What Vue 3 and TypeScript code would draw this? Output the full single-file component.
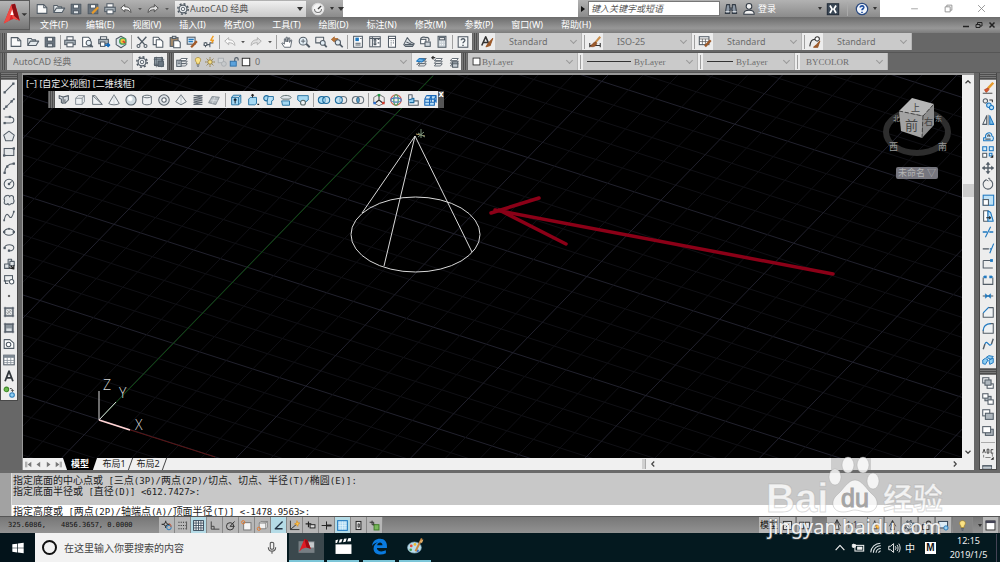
<script setup lang="ts">
const INK = '#525c66'
const BLUE = '#1f78c0'

const p = (d: string, c = INK, f = 'none', w = 1.2): string =>
  `<path d="${d}" stroke="${c}" fill="${f}" stroke-width="${w}" stroke-linejoin="round"/>`
const dot = (x: number, y: number, c = INK, r = 1.3): string =>
  `<rect x="${x - r}" y="${y - r}" width="${r * 2}" height="${r * 2}" fill="${c}"/>`
const ring = (x: number, y: number, r: number, c = INK, f = 'none', w = 1.2): string =>
  `<circle cx="${x}" cy="${y}" r="${r}" stroke="${c}" fill="${f}" stroke-width="${w}"/>`
const box = (x: number, y: number, w: number, h: number, c = INK, f = '#fff'): string =>
  `<rect x="${x}" y="${y}" width="${w}" height="${h}" stroke="${c}" fill="${f}" stroke-width="1.2"/>`

const brush = p('M14 2L8.500 8.500', '#c98e4c', 'none', 2.400) + p('M9 8C6 8 5 11 2.500 13C6 14 9.500 13 10 9.500Z', '#7c4420', '#9c5a2b', 0.800)
const gear = ring(8, 8, 4.500, INK, '#eef1f3', 1.400) + ring(8, 8, 2, INK, 'none', 1)
  + '<circle cx="8" cy="8" r="6" fill="none" stroke="#4a545e" stroke-width="1.600" stroke-dasharray="2.300 2.400"/>'
const sheets = p('M5 6.500L7 4H14L12 6.500ZM5 9.500L7 7H14L12 9.500ZM5 12.500L7 10H14L12 12.500Z', INK, '#fff', 1)

const icons: Record<string, string> = {
  new: p('M2.500 3H10L13.500 6.500V13H2.500Z', INK, '#fafafa') + p('M10 3V6.500H13.500'),
  open: p('M2 12V4H6L7 5.500H11V7M2 12L5 7H14.500L11.500 12Z', INK, '#e3e8eb'),
  save: p('M2.500 2.500H13.500V13.500H2.500Z', INK, '#69747f') + box(5, 3, 6, 4, INK, '#fff') + box(5, 10, 6, 3.500, INK, '#dfe4e8'),
  saveas: p('M2.500 2.500H13.500V13.500H2.500Z', INK, '#69747f') + box(5, 3, 6, 4, INK, '#fff') + p('M7 13L14 6', '#e69a2b', 'none', 2.500),
  print: box(4.500, 2, 7, 4) + box(2, 6, 12, 5, INK, '#aab4bb') + box(4.500, 9, 7, 4.500),
  preview: p('M3 2.500H9.500L12 5V13.500H3Z', INK, '#fff') + ring(10, 9, 3, INK, '#e8f2f8') + p('M12 11L14.500 14', INK, 'none', 2),
  publish: box(4, 2, 7, 3) + box(2, 5, 11, 5, INK, '#aab4bb') + box(4, 8, 5, 5) + p('M9 11.500H14M12 9.500L14.200 11.500L12 13.500', '#1769b5', 'none', 2),
  dwf: p('M8 1.500L13.500 4.500V11L8 14.500L2.500 11V4.500Z', INK, '#dfe8ee') + ring(10, 7, 3.500, '#4aa45a', '#f3c23c', 1.500) + p('M10 7L13 9', '#d3402f', 'none', 2),
  cut: p('M3 2L11 11M13 2L5 11', INK, 'none', 1.600) + ring(4, 12.500, 1.700) + ring(12, 12.500, 1.700),
  copy: p('M2.500 2.500H8L10 4.500V11H2.500Z', INK, '#fff') + p('M6 5.500H11.500L13.500 7.500V14H6Z', INK, '#fff'),
  paste: box(2.500, 3, 9, 10, INK, '#a2896a') + box(5, 1.500, 4, 2.500, INK, '#cdd3d8') + p('M6.500 6.500H12L14 8.500V14.500H6.500Z', INK, '#fff'),
  match: box(2.500, 2.500, 9, 8, INK, '#dce9f3') + p('M4 5H10M4 7.500H9', BLUE, 'none', 1.600) + p('M13.500 7L9 12L7 14', '#a35a28', 'none', 2.600),
  block: p('M2 11H9M4 8V14M9 14V9H13', INK) + box(2.500, 9, 3, 3) + p('M13 1L10 6H13L11 9', '#f09d22', 'none', 1.600),
  undo: p('M2 7L6.500 3V5.500C11.500 5.500 13.500 8 13.500 12C11.500 9.500 9.500 8.800 6.500 8.800V11.200Z', 'currentColor', '#fafafa', 1),
  redo: p('M14 7L9.500 3V5.500C4.500 5.500 2.500 8 2.500 12C4.500 9.500 6.500 8.800 9.500 8.800V11.200Z', 'currentColor', '#dfdfdf', 1),
  drop: '<path d="M5.500 6.500H10.500L8 9.500Z" fill="#555"/>',
  pan: p('M5 14L2 9.500L3.500 9L5 10.500V4.500L6 4L7 8V2.500L8.300 2.500L8.800 8L10 3L11.200 3.500L11 8.500L12.500 5.500L13.500 6L12 14Z', INK, '#fff', 1),
  zoomrt: ring(7, 7, 4.500, INK, '#e3eef5') + p('M4.500 7H9.500M7 4.500V9.500', INK, 'none', 1) + p('M10.500 10L14.500 14', INK, 'none', 2.200),
  zoomwin: p('M2 2.500H11V9H2Z') + ring(10, 9, 2.800, INK, '#e3eef5') + p('M12 11L14.500 14', INK, 'none', 2),
  zoomprev: p('M1.500 5L5 2V4H9V6.500H5V8Z', '#a45e26', '#bb7534', 0.800) + ring(9, 8.500, 3, INK, '#e3eef5') + p('M11 10.500L14.500 14', INK, 'none', 2),
  props: box(3, 1.500, 10, 12.500) + '<rect x="5" y="3" width="4" height="4" fill="#1f78c0"/>' + p('M5 9.500H11M5 11.500H11M10.500 4H12'),
  design: box(2, 2, 12, 11.500) + p('M5 2V13M7 5H9V7H7ZM11 5H13M7 9H9V11H7ZM11 9H13M2 4H14'),
  palette: box(4, 1.500, 8, 12.500) + p('M4 4H12M6.500 6.500H7.500M9 6.500H10M6.500 9H7.500M9 9H10M6.500 11.500H7.500'),
  sheetset: p('M2 11L6 3L10 8L14 10L12 13H4Z', INK, '#dde2e6') + p('M3 11H13M5 8L12 11'),
  markup: p('M3 5C3 2 8 2 9 3C13 2 13 6 12 7', INK, 'none', 1.400) + box(3, 5, 6, 5) + box(8, 8, 6, 5, INK, '#cfd6dc'),
  calc: box(3.500, 1.500, 9, 12.500, INK, '#cdd4d9') + box(5, 3, 6, 2.500) + p('M5.500 8H6.500M8 8H9M5.500 11H6.500M8 11H9M10.500 8H11M10.500 11H11', '#fff'),
  help: box(2.500, 2, 11, 12, INK, '#f5f7f8') + p('M6 6C6 3.500 10.500 3.800 10 6.500C9.700 7.800 8 7.700 8 9.500M8 11V12.500', INK, 'none', 1.600),
  gear,
  wssave: box(3, 3, 9, 9, INK, '#9da9b3') + p('M2 5H14M2 10.500H14M5 2V14M11 2V14', INK, 'none', 0.800) + box(7, 7, 6, 6, INK, '#6b7782'),
  layers: sheets + box(2, 6, 5, 7, INK, '#dfe5ea') + p('M3 8H6M3 10H6'),
  bulb: p('M8 2C4 2 3.500 6 6 8.500V10.500H10V8.500C12.500 6 12 2 8 2Z', '#a58634', '#fbe284', 1) + p('M6.300 12H9.700M7 13.800H9'),
  sun: ring(8, 8, 3, '#8a7337', '#f6df83') + p('M8 1.500V3.500M8 12.500V14.500M1.500 8H3.500M12.500 8H14.500M3.500 3.500L5 5M11 11L12.500 12.500M12.500 3.500L11 5M3.500 12.500L5 11', '#8a7337'),
  freeze: box(3, 3, 7, 6, '#a9adb0', '#d0d3d5') + ring(10.500, 10.500, 3.200, '#a9adb0', '#c6c9cb'),
  lock: p('M9 7V4C9 1.500 13.500 1.500 13.500 4V6', INK, 'none', 1.500) + box(3, 7, 8, 6.500, '#2d6ea5', '#5ba2dc'),
  square: box(3, 3, 10, 10, '#222', '#fff'),
  laymake: sheets + p('M3 7L6 4L12 5L9 8Z', BLUE, '#6fb3e5') + p('M3 11L6 9'),
  layprev: sheets + p('M2 3H6M4 1.500L2 3L4 5', '#333', 'none', 1.400),
  laystate: sheets + box(7.500, 8, 6, 6, INK, '#c9d1d8') + p('M7.500 10H13.500'),
  tstyle: p('M2 12L6.500 2L10.500 11M4 8.500H9', '#333', 'none', 1.800) + p('M14.500 4L9 10L7 13.500L11.500 12Z', '#9c5a2b', '#9c5a2b'),
  dstyle: p('M2 9V14M14 9V14M2 12H14', '#333', 'none', 1.200) + brush,
  tbstyle: box(1.500, 2, 11, 9) + p('M1.500 4.500H12.500M5 4.500V11M8.500 4.500V11M1.500 7.500H12.500', '#555', 'none', 0.800) + p('M14.500 6L8 13', '#9c5a2b', 'none', 2.800),
  mlstyle: p('M2 13C3 7 4 5 8 5', '#333') + ring(10.500, 4.500, 2.500, '#333', '#fff') + p('M13.500 7L10 11L6.500 14H11Z', '#9c5a2b', '#9c5a2b'),
  line: p('M3 13L13 3') + dot(3, 13) + dot(13, 3),
  xline: p('M2 14L14 2') + dot(5, 11) + dot(11, 5) + dot(2.500, 13.500, INK, 1) + dot(13.500, 2.500, INK, 1),
  pline: p('M3 4.500H9C15 4.500 15 11.500 9 11.500H3') + dot(3, 11.500) + dot(9, 4.500),
  polygon: p('M8 2.500L14 7L11.800 13.500H4.200L2 7Z', INK, '#e3e6e8'),
  rect: box(2.500, 4, 11, 8, INK, '#e3e6e8') + dot(2.500, 12) + dot(13.500, 4),
  arc: p('M3 14C3 7 7 3 13.500 3') + dot(3, 13.500) + dot(6, 6.500) + dot(13.500, 3),
  circle: ring(8, 8, 5.500, INK, '#eef0f1') + p('M8 8L11 5') + dot(8, 8),
  cloud: p('M5.500 3C7.500 1.500 9 4 8.500 4.500C10 1.500 14 3 13 6.500C14.500 9 13.500 13.500 10.500 12C8 15 6.500 13 7 12C4 14.500 1.500 12 3 8.500C1.500 6.500 3 3 5.500 3Z', INK, '#e3e6e8'),
  spline: p('M2.500 13C4 5 6 5 8 8C10 12 12 9 13.500 3') + dot(2.500, 13, INK, 1) + dot(13.500, 3, INK, 1),
  ellipse: '<ellipse cx="8" cy="8" rx="5.500" ry="3.700" fill="#eef0f1" stroke="#4a545e" stroke-width="1.200"/>' + dot(2.500, 8) + dot(13.500, 8) + dot(8, 4.300, INK, 1),
  earc: p('M3 8C3 3 14 3 13.500 8C13 11 10 11.500 8 11') + dot(3, 8) + dot(8, 11),
  insert: p('M3 8H8V13H3ZM7 8V2.500H11V5M9 5H14V10H9Z', INK, '#dfe3e6') + p('M8 12.500L13.500 13.500V9.500M10 10L13.500 13.500', '#222', 'none', 1.400),
  makeblk: box(3, 3, 9, 6, INK, '#eef0f1') + ring(11, 10, 2.500, INK, '#fff') + p('M2 9H4V12H7'),
  point: dot(8, 8, '#666', 1.200),
  hatch: box(3.500, 3.500, 9, 9, INK, '#e0e3e5') + p('M2 3.500H14M2 12.500H14M3.500 2V14M12.500 2V14', INK, 'none', 0.900) + p('M5 5L11 11M5 8L8 11M8 5L11 8M5 11L11 5', '#999', 'none', 0.800),
  gradient: box(3.500, 3.500, 9, 9, INK, '#8c969e') + p('M2 3.500H14M2 12.500H14M3.500 2V14M12.500 2V14', INK, 'none', 0.900) + '<rect x="5" y="8.500" width="6" height="3" fill="#d9dee2"/>',
  region: p('M2.500 3H9L13.500 7V13H2.500Z', INK, '#fff') + ring(7.500, 8.500, 2.600),
  table: box(2, 2.500, 12, 11) + '<rect x="2" y="2.500" width="12" height="3" fill="#7c8791"/>' + p('M6 5V13.500M10 5V13.500M2 8.500H14M2 11H14', '#7f8a93', 'none', 0.900),
  mtext: p('M3.500 14L8 2.500L12.500 14M5 10H11', '#30363b', 'none', 2),
  addsel: ring(5, 5, 2.600, '#3f8a2a', '#6dbb4c') + ring(11.500, 11.500, 2.600, '#2c7db9', '#8fcdf2') + p('M9 4C12 4 12 5 12 7M10.500 6L12 7.500L13.500 6', '#333', 'none', 1),
  psolid: p('M2.500 3L7 4.500V12L5 11V7L2.500 6ZM7 4.500L13 3V8L9 12V7', INK, '#d5dadf'),
  cube: p('M3 6L6 3H13V10L10.500 13H3ZM3 6H10.500L13 3M10.500 6V13', '#7b858d', '#eef1f3', 1),
  wedge: p('M3 3V13H14ZM3 3L6 3L14 13', '#59636c', '#eef1f3', 1),
  cone: p('M8 2L14 12C12 14 4 14 2 12Z', '#59636c', '#eef1f3', 1) + p('M8 2V13', '#c5cacf', 'none', 0.800),
  sphere: ring(8, 8, 5.800, '#59636c', '#cdd8de') + ring(7, 6.500, 2.500, '#eef3f5', '#fff', 1),
  cylinder: p('M3 4V12C5 14 11 14 13 12V4C11 2 5 2 3 4C5 6 11 6 13 4', '#59636c', '#eef1f3', 1),
  torus: ring(8, 8, 6, '#59636c', '#dfe4e8') + ring(8, 8, 2.500, '#59636c', '#fff'),
  pyramid: p('M8 2L14 10L8 13.500L2 10Z', '#59636c', '#eef1f3', 1) + p('M8 2V13', '#adb5bb', 'none', 0.800),
  helix: p('M3 3H13L3 5.500H13L3 8H13L3 10.500H13L3 13H13', INK, 'none', 1.100),
  planar: p('M2 11L6 4L14 5L10 13Z', '#8d959c', '#b4bbc0') + p('M4 8L12 9M9 4.500L6 12', '#e0e3e6', 'none', 0.800),
  extrude: p('M3 5L5 2.500H13.500V11L11 13.500H3ZM3 5H11L13.500 2.500M11 5V13.500', '#1c6a9c', '#a4d8f2', 1) + p('M7 12V7M5.500 8.500L7 6.500L8.500 8.500', '#123'),
  presspull: p('M3 7L5 5H12V12L10 13.500H3Z', '#1c6a9c', '#a4d8f2', 1) + p('M7.500 5V1.500M6 3L7.500 1.500L9 3M13 13H15', '#222'),
  sweep: ring(5, 6, 3, '#1c6a9c', '#a4d8f2') + p('M7 4H13V8L11 9V13H6V9Z', '#1c6a9c', '#b9e1f6', 1),
  revolve: p('M2 5C4 2 12 2 14 5L12 7H4Z', '#566', '#dfe5e9', 1) + p('M3 9H12V14H4Z', '#1c6a9c', '#a4d8f2', 1),
  loft: p('M2 3H14V8L10 11H6L2 8Z', '#1c6a9c', '#a4d8f2', 1) + ring(8, 11, 2.800, '#566', '#eef1f3'),
  union: ring(5.500, 8, 4, '#1c6a9c', '#a4d8f2') + ring(10.500, 8, 4, '#1c6a9c', '#a4d8f288'),
  subtract: ring(10.500, 8, 4, '#67727b', '#eee') + ring(5.500, 8, 4, '#1c6a9c', '#a4d8f2aa'),
  intersect: ring(5.500, 8, 4, '#67727b') + ring(10.500, 8, 4, '#67727b') + p('M8 5C6.500 7 6.500 9 8 11C9.500 9 9.500 7 8 5Z', '#1c6a9c', '#8fcdf0', 1),
  move3: p('M8 8V2M8 8L3 12M8 8L13 12', '#333') + p('M8 1.500L14 5V11.500L8 14.500L2 11.500V5Z', '#666', 'none', 1) + dot(8, 2.500, '#279c46', 1.400) + dot(3, 11.500, '#2b6fd0', 1.400) + dot(13, 11.500, '#d63a2a', 1.400),
  rot3: ring(8, 8, 6, '#d6564a') + '<ellipse cx="8" cy="8" rx="2.500" ry="6" fill="none" stroke="#3e9e54" stroke-width="1.300"/><ellipse cx="8" cy="8" rx="6" ry="2.500" fill="none" stroke="#4a78bb" stroke-width="1.300"/>',
  align3: p('M3 2H7V9H14V14H3Z', '#59636c', '#eef1f3') + p('M3 8L9 6V11H4', '#1c6a9c', '#8fcdf0'),
  array3: p('M2 7H13V14H2ZM4 3H15V11M2 7L4 3M13 7L15 3M7.500 7L9.500 3V10M2 10.500H13L15 7M7.500 7V14', '#1a68b8', '#b8e0f8', 1.200),
  erase: p('M14 2L8 8.500', '#e69a2b', 'none', 2.800) + p('M8 8L4 10L6 13L9 10Z', '#b44222', '#d8582f', 1) + p('M2 14H13', '#555'),
  copyo: ring(5, 4.500, 2.500) + ring(9, 9.500, 2.600, BLUE, '#bfe2f7') + ring(12, 12, 2.400, BLUE, '#bfe2f7') + p('M9.500 3.500H13V6', '#333'),
  mirror: p('M6.500 3V13H2Z', INK, '#eef1f3') + p('M10 3V13H14.500Z', BLUE, '#7fc0ea') + p('M8.200 2V14', '#555', 'none', 0.800),
  offset: p('M3 13.500V10H5.500C3 5 12.500 1 12.500 8C15 8.500 14.500 13.500 12.500 13.500Z', BLUE, '#cfe9f9') + p('M5 11.500H11M8 9C7 6 10.500 6 10 9', INK, 'none', 1.500),
  array: box(2, 2, 4.500, 4.500, BLUE, '#d5ecf9') + box(9.500, 2, 4.500, 4.500, BLUE, '#d5ecf9') + box(2, 9.500, 4.500, 4.500, INK, '#fff') + box(9.500, 9.500, 3, 3, BLUE, '#d5ecf9') + '<path d="M14 11V14.500H10.500Z" fill="#222"/>',
  move: p('M8 2V14M2 8H14', INK, 'none', 1.600) + p('M6 4L8 1.500L10 4ZM6 12L8 14.500L10 12ZM4 6L1.500 8L4 10ZM12 6L14.500 8L12 10Z', INK, INK, 0.800),
  rotate: p('M10.500 3.500A5.500 5.500 0 1 1 5.500 3.400') + p('M4 5L5.500 3L8.500 4.500M8 1.500H10V4', INK, 'none', 1),
  scale: box(2.500, 2.500, 12, 11.500, BLUE, '#bfe2f7') + box(2.500, 7.500, 6, 6.500, INK, '#fff'),
  stretch: p('M3 2H8V14H3Z', INK, '#fff') + p('M8 2L11 4L14 14H8Z', BLUE, '#bfe2f7') + p('M6 10H11M9.500 8.500L11 10L9.500 11.500', '#222'),
  trim: p('M2 8H7M9.500 8H14', BLUE, 'none', 1.500) + p('M5 14L11 2', BLUE, 'none', 1.300),
  extend: p('M2 9H9', INK, 'none', 1.500) + p('M10 9H12M10 14L14.500 3', BLUE, 'none', 1.300),
  breakpt: p('M2.500 4V12.500H13.500', INK) + p('M2.500 4H11', INK) + dot(12, 4, BLUE, 1.600),
  brk: p('M2.500 5V13H13.500V5', INK) + p('M2.500 4.500H5M11 4.500H13.500', BLUE, 'none', 1.500) + dot(5, 4.500, BLUE, 1.500) + dot(11, 4.500, BLUE, 1.500),
  join: p('M2 8H14', INK) + p('M5 5.500L8 8L5 10.500ZM11 5.500L8 8L11 10.500Z', BLUE, BLUE, 0.600),
  chamfer: p('M2.500 9V14H14V3H9', INK, '#eef1f3') + p('M2.500 9L9 2.500', BLUE, 'none', 1.400),
  fillet: p('M2.500 10V14H14V3H10', INK, '#eef1f3') + p('M2.500 11C2.500 6 6 3 11 3', BLUE, 'none', 1.400),
  blend: p('M2.500 14L4.500 8M12 8L14 2', INK, 'none', 1.600) + p('M4.500 8C7 2 9 13 12 8', BLUE, 'none', 1.400),
  explode: p('M2 8L5 6L8 8L5 13L2 12ZM6 5L9 3L14 4L11 7ZM9 8L14 6V11L10 13Z', BLUE, '#8fcdf0', 1.100),
  front: box(2, 2, 7, 6) + box(7, 9, 7, 5) + box(4.500, 4.500, 7, 6, INK, '#aeb6bd'),
  back: box(4.500, 5, 7, 5, INK, '#aeb6bd') + box(2, 2, 6, 5) + box(8, 9, 6, 5),
  above: box(2, 2, 8, 7) + box(5, 6, 9, 7, INK, '#aeb6bd'),
  under: box(5, 6, 9, 7, INK, '#aeb6bd') + box(2, 3, 9, 7),
  textfront: p('M2 7L3.500 2.500L5 7M7 2.500V7H9V2.500ZM14 3H11.500V7H14', '#333', 'none', 1) + p('M3 9V12M5 12H11M13 7V11', '#777', 'none', 1) + '<path d="M14.500 11V14.500H11Z" fill="#222"/>',
  hatchback: box(2, 3, 10, 8, INK, '#8f9aa4') + p('M2 5.500H12M2 8H12', '#fff', 'none', 0.800) + p('M13 9V14', '#222'),
  compass: ring(8, 8, 6.500, '#ddd', '#f4f4f4', 1.500) + p('M8 8L11.500 4.500', '#444', 'none', 1.600) + p('M4 8A4 4 0 0 0 12 8', '#777'),
  infer: p('M7 2V11M2 6.500H12', '#333', 'none', 1.500) + ring(7, 6.500, 2, '#333', '#bbb') + ring(11, 10.500, 2.800, '#2879b8') + p('M11 6C14 6 14 9 13 10', '#d0572f'),
  snap: p('M3 4H12M3 8H12M3 12H12', '#333', 'none', 1.300).replace('/>', ' stroke-dasharray="1.300 1.500"/>') + p('M13 3V13', '#555'),
  grid: box(2, 2, 12, 12, '#345', '#fff') + p('M5 2V14M8 2V14M11 2V14M2 5H14M2 8H14M2 11H14', '#345', 'none', 1),
  ortho: p('M4 3V12.500H14M4 9H7.500V12.500', '#444'),
  polar: ring(7.500, 9, 4.500, '#333') + p('M7.500 9L13 3M7.500 9H13', '#333'),
  osnap: box(4.500, 4.500, 9, 9, '#777', '#f5f5f5') + ring(4, 4, 2, '#e07a31'),
  osnap3: p('M4 5L6 3H14V10L12 12H4ZM4 5H12L14 3M12 5V12', '#777', '#f2f2f2', 1) + ring(3.500, 12, 2, '#e07a31'),
  otrack: p('M13 3L4 12H13', '#234', 'none', 1.600),
  ducs: p('M3 2V13H14M3 13L11 6', '#333') + p('M11 2L12 4.500L14.500 5L12.500 6.500L12 9L10.500 7L8 6L10.500 5Z', '#d98a19', '#ffc74a', 0.800),
  dyn: p('M2 6H9M5.500 3V10', '#222', 'none', 1.400) + box(7.500, 7, 6, 4, '#222', '#ddd'),
  lwt: p('M2 8H14M8 3V13', '#222', 'none', 1.200) + p('M8 8H14', '#222', 'none', 2.400),
  tpy: box(2, 2, 12, 12, '#1f78c0', '#a8d5f1') + p('M3 5H13M3 8H13M3 11H13M5 3V13M8 3V13M11 3V13', '#e8f5fc', 'none', 0.800),
  qp: box(5, 3, 6, 10, '#222', '#ddd') + p('M7.500 6H9V10H7.500Z', '#222', 'none', 1),
  sc: p('M2 4H7V8M5 2V7H9', '#333') + box(7.500, 7, 6, 6.500, '#3f7d2a', '#79b95c'),
  layout: box(3, 3, 10, 10, '#333', '#e7e7e7') + p('M6 10L10 6', '#333'),
  quick: box(2, 4, 5, 8, '#333', '#eee') + box(9, 4, 5, 8, '#333', '#eee'),
  anno: p('M8 2L10.500 13H5.500ZM8 2L4 9M8 2L12 9', '#333', '#ddd', 1),
  sunadd: p('M7 2L10 12H4Z', '#333', '#ddd', 1) + ring(11, 9, 2.500, '#d98a19', '#ffc74a'),
  wslock: box(3, 7, 8, 6, '#333', '#ddd') + p('M8 7V4.500C8 2 13 2 13 4.500V7', '#333', 'none', 1.400),
  hardware: box(2, 3, 11, 8, '#345', '#dcecf6') + ring(11, 11, 2.600, '#2879b8', '#9ad1f2'),
  clean: box(2.500, 2.500, 11, 11, '#333', '#fff') + '<rect x="2" y="2" width="12" height="3" fill="#445"/>',
  binoc: p('M3 3H6.500V7H9.500V3H13L14.500 13H9.500V9H6.500V13H1.500Z', '#333b45', '#8d98a5', 1.200) + p('M1.500 11H6.500M9.500 11H14.500', '#fff', 'none', 0.800),
  user: ring(8, 5, 3.200, '#333b45', '#f3f3f3') + p('M2 14C2 10 5 9.500 8 9.500S14 10 14 14Z', '#333b45', '#f3f3f3'),
  exchange: box(1.500, 2, 13, 12.500, '#222c38', '#3b4856') + p('M4.500 4L7 8.200L4.500 12.500M11.500 4L9 8.200L11.500 12.500', '#fff', 'none', 2),
  qmark: ring(8, 8, 6.500, '#2b4a80', '#f1f5fb', 1.400) + p('M6 6.200C6 3.800 10.500 4 10 6.500C9.700 7.800 8 7.700 8 9.500M8 11V12.500', '#1e4ea0', 'none', 1.900),
  min: p('M2 8.500H14', '#999', 'none', 1.500),
  restore: p('M2 5H11V14H2ZM5 5V2H14V11H11', '#888', 'none', 1.500),
  close: p('M2 2L14 14M14 2L2 14', '#888', 'none', 1.500),
  cmin: p('M2 11H14', '#222', 'none', 3),
  crestore: p('M2 7H10V13H2ZM5 7V3H14V10H10', '#222', 'none', 2),
  cclose: p('M3 3L13 13M13 3L3 13', '#222', 'none', 3),
  first: p('M3 3V13M5 3V13', '#777') + '<path d="M13 3V13L6.500 8Z" fill="#777"/>',
  prev: '<path d="M11 3V13L4.500 8Z" fill="#777"/>',
  next: '<path d="M5 3V13L11.500 8Z" fill="#777"/>',
  last: p('M13 3V13M11 3V13', '#777') + '<path d="M3 3V13L9.500 8Z" fill="#777"/>',
  up: p('M3 10.500L8 5.500L13 10.500', '#444', 'none', 2.400),
  down: p('M3 5.500L8 10.500L13 5.500', '#444', 'none', 2.400),
  left: p('M10.500 3L5.500 8L10.500 13', '#444', 'none', 2.400),
  right: p('M5.500 3L10.500 8L5.500 13', '#444', 'none', 2.400),
  win: '<path d="M1.500 3.800L7 3V7.600H1.500ZM7.800 2.900L14.500 2V7.600H7.800ZM1.500 8.400H7V13L1.500 12.200ZM7.800 8.400H14.500V14L7.800 13.100Z" fill="#fff"/>',
  mic: p('M6 2.500C6 1 10 1 10 2.500V8C10 10 6 10 6 8ZM3.800 7C3.800 13 12.200 13 12.200 7M8 11.500V14.500', '#555', 'none', 1.200),
  acad: '<rect x="0.500" y="3" width="15" height="11" fill="#777f84"/><rect x="9" y="4" width="6" height="5" fill="#c6cacc"/><path d="M1 13L6 1L9 2L12 10L8 9L4 10Z" fill="#e01b24"/><path d="M6 1L8 9L12 10L9 2Z" fill="#9d0c14"/>',
  clap: '<rect x="0.500" y="6" width="15" height="9" fill="#fff"/><path d="M0.500 2L3 1.500L2 4.500L0.500 5ZM4.500 1.300L7 1L6 4L3.500 4.400ZM8.500 0.800L11 0.500L10 3.500L7.500 3.900ZM12.500 0.300L15 0V3L11.500 3.400Z" fill="#fff"/>',
  edge: '<path d="M1 7.500C1.500 3 4.500 0.800 8.500 0.800C13 0.800 15 4 15 7.500V9.500H5.500C5.700 13 10.500 13.500 14 11.600V14.400C9 17 2.400 15.300 2.400 10C2.400 7 4.200 5 6.500 4C4.200 4.300 2.300 5.700 1 7.500ZM5.800 6.800H10.800C10.800 3.500 6.400 3.500 5.800 6.800Z" fill="#0a7be0"/>',
  paint: '<ellipse cx="7" cy="9" rx="6.500" ry="5.200" fill="#b9dceb" stroke="#7fa8ba" stroke-width="0.600"/><circle cx="4" cy="7.500" r="1.300" fill="#e24b3c"/><circle cx="7.500" cy="6" r="1.300" fill="#f0b92c"/><circle cx="3.500" cy="11" r="1.200" fill="#49a04b"/><circle cx="10" cy="12" r="1.200" fill="#3b6fc0"/><path d="M14 0.500L8 12.500" stroke="#c78743" stroke-width="1.800"/><path d="M12 3L15.500 1.500L14 5Z" fill="#e6b46e"/>',
  trayup: p('M3 10.500L8 5L13 10.500', '#eee', 'none', 1.300),
  battery: '<rect x="4.500" y="5" width="10" height="6.500" fill="none" stroke="#eee" stroke-width="1.200"/><rect x="7" y="6.500" width="6" height="3.500" fill="#eee"/><path d="M3 3V8M1.500 4H5V7H1.500Z" stroke="#eee" fill="#eee"/>',
  wifi: p('M2 13A11 11 0 0 1 13 2.500M5 13.500A8 8 0 0 1 13.500 5.500M8 13.500A5.500 5.500 0 0 1 13.500 8.500M11 13.500A2.500 2.500 0 0 1 13.500 11.500', '#dfe5e7', 'none', 1.200),
  sound: p('M2 6H4L7.500 3V13L4 10H2ZM9.500 6C10.500 7 10.500 9 9.500 10M11.500 4.500C13 6.500 13 9.500 11.500 11.500M13.500 3C15.500 6 15.500 10 13.500 13', '#eee', 'none', 1.100),
}

const menus = ['文件(F)', '编辑(E)', '视图(V)', '插入(I)', '格式(O)', '工具(T)', '绘图(D)', '标注(N)', '修改(M)', '参数(P)', '窗口(W)', '帮助(H)']
const quick = ['new', 'open', 'save', 'saveas', 'print', 'undo', 'drop', 'redo', 'drop']
const standard = ['new', 'open', 'save', '|', 'print', 'preview', 'publish', 'dwf', '|', 'cut', 'copy', 'paste', 'match', 'block', '|', 'undo', 'drop', 'redo', 'drop', '|', 'pan', 'zoomrt', 'zoomwin', 'zoomprev', '|', 'props', 'design', 'palette', 'sheetset', 'markup', 'calc', '|', 'help']
const styleCombos = [
  { icon: 'tstyle', text: 'Standard', label: '文字样式' },
  { icon: 'dstyle', text: 'ISO-25', label: '标注样式' },
  { icon: 'tbstyle', text: 'Standard', label: '表格样式' },
  { icon: 'mlstyle', text: 'Standard', label: '多重引线样式' },
]
const propCombos = [
  { kind: 'color', text: 'ByLayer', label: '颜色' },
  { kind: 'ltype', text: 'ByLayer', label: '线型' },
  { kind: 'lweight', text: 'ByLayer', label: '线宽' },
  { kind: 'plot', text: 'BYCOLOR', label: '打印样式' },
]
const draw = ['line', 'xline', 'pline', 'polygon', 'rect', 'arc', 'circle', 'cloud', 'spline', 'ellipse', 'earc', 'insert', 'makeblk', 'point', 'hatch', 'gradient', 'region', 'table', 'mtext', 'addsel']
const modify = ['erase', 'copyo', 'mirror', 'offset', 'array', 'move', 'rotate', 'scale', 'stretch', 'trim', 'extend', 'breakpt', 'brk', 'join', 'chamfer', 'fillet', 'blend', 'explode']
const order = ['front', 'back', 'above', 'under', '|', 'textfront', 'hatchback']
const modeling = ['psolid', 'cube', 'wedge', 'cone', 'sphere', 'cylinder', 'torus', 'pyramid', 'helix', 'planar', '|', 'extrude', 'presspull', 'sweep', 'revolve', 'loft', '|', 'union', 'subtract', 'intersect', '|', 'move3', 'rot3', 'align3', 'array3']
const toggles = ['infer', 'snap', 'grid', 'ortho', 'polar', 'osnap', 'osnap3', 'otrack', 'ducs', 'dyn', 'lwt', 'tpy', 'qp', 'sc']
const active = new Set(['grid', 'otrack', 'tpy'])
const navs = ['first', 'prev', 'next', 'last']
const tasks = ['acad', 'clap', 'edge', 'paint']
const history = ['指定底面的中心点或 [三点(3P)/两点(2P)/切点、切点、半径(T)/椭圆(E)]:', '指定底面半径或 [直径(D)] <612.7427>:']
const prompt = '指定高度或 [两点(2P)/轴端点(A)/顶面半径(T)] <-1478.9563>:'

interface Run { text: string; latin: boolean }
const runs = (s: string): Run[] =>
  (s.match(/[\x20-\x7e]+|[^\x20-\x7e]+/g) ?? []).map((text) => ({ text, latin: text.charCodeAt(0) < 127 }))

interface GridLine { x1: number; y1: number; x2: number; y2: number; major: boolean }
const SPAN = 2400
const gridLines: GridLine[] = []
for (let k = -60; k <= 60; k++) {
  const y = 320 + k * 20
  gridLines.push({ x1: 0, y1: y, x2: SPAN, y2: y + SPAN * 0.322, major: k % 5 === 0 })
}
for (let m = -20; m <= 100; m++) {
  const x = 410.500 + m * 34.900
  gridLines.push({ x1: x, y1: 0, x2: x - SPAN / 1.030, y2: SPAN, major: m % 5 === 0 })
}
</script>

<template>
  <div class="app">
    <header class="head">
      <button class="logo" aria-label="应用程序菜单">
        <svg viewBox="0 0 30 30">
          <path d="M3 24L11 4L15 3L20 21L14 19L9 21Z" fill="#d8232a" />
          <path d="M11 4L15 3L20 21L15 19Z" fill="#8d1016" />
          <path d="M3 24L9 21L11 14L13 19L20 21L14 16L11 4Z" fill="#ef4a43" />
          <path d="M10 15L12 9L13.500 15Z" fill="#fff" />
          <path d="M22 13H28L25 16Z" fill="#333" />
        </svg>
      </button>
      <div class="title">
        <div class="title-left">
          <div class="quick">
            <button v-for="(n, i) in quick" :key="i" class="tb" :class="{ thin: n === 'drop' }" :aria-label="n">
              <svg viewBox="0 0 16 16" v-html="icons[n]" />
            </button>
          </div>
          <label class="ws">
            <svg viewBox="0 0 16 16" v-html="icons.gear" />
            <select aria-label="工作空间"><option>AutoCAD 经典</option></select>
            <i class="tri" />
          </label>
          <button class="tb" aria-label="导航"><svg viewBox="0 0 16 16" v-html="icons.compass" /></button>
          <i class="tri small" />
          <i class="tri" />
        </div>
        <div class="title-right">
          <i class="tri east" />
          <input class="find" type="text" placeholder="键入关键字或短语" aria-label="搜索帮助">
          <button class="tb" aria-label="搜索"><svg viewBox="0 0 16 16" v-html="icons.binoc" /></button>
          <button class="login"><svg viewBox="0 0 16 16" v-html="icons.user" />登录</button>
          <i class="tri small" />
          <button class="tb" aria-label="Exchange"><svg viewBox="0 0 16 16" v-html="icons.exchange" /></button>
          <i class="rule" />
          <button class="tb" aria-label="帮助"><svg viewBox="0 0 16 16" v-html="icons.qmark" /></button>
          <i class="tri small" />
        </div>
        <div class="winbtns">
          <button v-for="n in ['min', 'restore', 'close']" :key="n" :aria-label="n"><svg viewBox="0 0 16 16" v-html="icons[n]" /></button>
        </div>
      </div>
      <nav class="menu">
        <button v-for="m in menus" :key="m">{{ m }}</button>
        <span class="docbtns">
          <button v-for="n in ['cmin', 'crestore', 'cclose']" :key="n" :aria-label="n"><svg viewBox="0 0 16 16" v-html="icons[n]" /></button>
        </span>
      </nav>
    </header>

    <div class="row">
      <i class="grip" />
      <div class="bar standard">
        <template v-for="(n, i) in standard" :key="i">
          <i v-if="n === '|'" class="sep" />
          <button v-else class="tb" :class="{ thin: n === 'drop', dim: n === 'undo' || n === 'redo' }" :aria-label="n"><svg viewBox="0 0 16 16" v-html="icons[n]" /></button>
        </template>
      </div>
      <i class="grip" />
      <div v-for="(c, i) in styleCombos" :key="i" class="bar styled" :class="{ lead: i === 0 }">
        <i v-if="i" class="sep" />
        <button class="tb" :aria-label="c.label"><svg viewBox="0 0 16 16" v-html="icons[c.icon]" /></button>
        <label class="combo centered"><select :aria-label="c.label"><option>{{ c.text }}</option></select></label>
      </div>
    </div>

    <div class="row second">
      <i class="grip" />
      <div class="bar wsbar">
        <label class="combo"><select aria-label="工作空间"><option>AutoCAD 经典</option></select></label>
        <button class="tb" aria-label="设置"><svg viewBox="0 0 16 16" v-html="icons.gear" /></button>
        <button class="tb" aria-label="保存空间"><svg viewBox="0 0 16 16" v-html="icons.wssave" /></button>
      </div>
      <i class="grip" />
      <div class="bar laybar">
        <button class="tb" aria-label="图层特性"><svg viewBox="0 0 16 16" v-html="icons.layers" /></button>
        <label class="combo layer">
          <svg v-for="n in ['bulb', 'sun', 'freeze', 'lock', 'square']" :key="n" viewBox="0 0 16 16" v-html="icons[n]" />
          <select aria-label="图层"><option>0</option></select>
        </label>
        <button v-for="n in ['laymake', 'layprev', 'laystate']" :key="n" class="tb" :aria-label="n"><svg viewBox="0 0 16 16" v-html="icons[n]" /></button>
      </div>
      <i class="grip" />
      <div v-for="c in propCombos" :key="c.kind" class="bar" :class="c.kind">
        <i v-if="c.kind !== 'color'" class="sep" />
        <label class="combo prop">
          <svg v-if="c.kind === 'color'" viewBox="0 0 16 16" v-html="icons.square" />
          <i v-else-if="c.kind !== 'plot'" class="sample" />
          <select :aria-label="c.label"><option>{{ c.text }}</option></select>
        </label>
      </div>
    </div>

    <main class="work">
      <aside class="side left">
        <i class="hgrip" />
        <button v-for="n in draw" :key="n" class="vb" :aria-label="n"><svg viewBox="0 0 16 16" v-html="icons[n]" /></button>
      </aside>

      <section class="doc">
        <div class="view">
          <svg class="scene">
            <line v-for="(g, i) in gridLines" :key="i" :x1="g.x1" :y1="g.y1" :x2="g.x2" :y2="g.y2" :stroke="g.major ? '#21212d' : '#101015'" />
            <path d="M76 345L410 1" stroke="#0f4d12" />
            <path d="M76 345L192 382" stroke="#5a1414" />
            <g fill="none" stroke="#d8d8d8">
              <path d="M76 345V316M76 345L93 327" />
              <path d="M76 345L107 355" stroke="#ffd6d6" stroke-width="1.500" />
              <ellipse cx="392.500" cy="159.500" rx="64.500" ry="37.500" />
              <path d="M339 138L392 61L361 191M392 61L449 177" />
              <path d="M393 59L402 61" stroke="#b5a06a" />
              <path d="M398 54V63M395 58L402 62M395 62L401 57" stroke="#789078" />
            </g>
            <g class="axis"><text x="80" y="315">Z</text><text x="96" y="323">Y</text><text x="112" y="355">X</text></g>
            <g fill="none" stroke="#8b0017" stroke-width="3.500" stroke-linecap="round">
              <path d="M810 199L472 135" /><path d="M468 138L516 123" /><path d="M476 135L543 169" />
            </g>
          </svg>
          <div class="vplabel">[−] [自定义视图] [二维线框]</div>
          <div class="floatbar">
            <i class="grip" />
            <div class="bar modeling">
              <template v-for="(n, i) in modeling" :key="i">
                <i v-if="n === '|'" class="sep" />
                <button v-else class="tb" :aria-label="n"><svg viewBox="0 0 16 16" v-html="icons[n]" /></button>
              </template>
            </div>
            <button class="fclose" aria-label="关闭">x</button>
          </div>
          <div class="cube">
            <svg viewBox="0 0 80 68">
              <ellipse cx="40" cy="38" rx="31" ry="21" fill="none" stroke="#2d2d2d" stroke-width="6" />
              <g class="dirs">
                <text x="12" y="56">西</text><text x="61" y="56">南</text>
                <text x="16" y="27" class="far">北</text><text x="58" y="27" class="far">东</text>
              </g>
              <path d="M35 4L57 10L46 22L22 17Z" fill="#b6b6b6" />
              <path d="M22 17L46 22L45 44L24 37Z" fill="#a3a3a3" />
              <path d="M46 22L57 10V31L45 44Z" fill="#8d8d8d" />
              <path d="M22 17L46 22L57 10M46 22L45 44" fill="none" stroke="#444" stroke-dasharray="4 2" />
              <text x="34" y="17" class="face">上</text><text x="28" y="36" class="face big">前</text><text x="47" y="31" class="face">右</text>
            </svg>
            <button>未命名 ▽</button>
          </div>
        </div>
        <div class="vscroll">
          <button aria-label="上移"><svg viewBox="0 0 16 16" v-html="icons.up" /></button>
          <i class="vspace-a" /><i class="vthumb" /><i class="vspace-b" />
          <button aria-label="下移"><svg viewBox="0 0 16 16" v-html="icons.down" /></button>
        </div>
        <div class="tabs">
          <button v-for="n in navs" :key="n" class="nav" :aria-label="n"><svg viewBox="0 0 16 16" v-html="icons[n]" /></button>
          <button class="tab on">模型</button>
          <button class="tab">布局1</button>
          <button class="tab">布局2</button>
          <div class="hscroll">
            <i class="split" />
            <button aria-label="左移"><svg viewBox="0 0 16 16" v-html="icons.left" /></button>
            <i class="hspace-a" /><i class="hthumb" /><i class="hspace-b" />
            <button aria-label="右移"><svg viewBox="0 0 16 16" v-html="icons.right" /></button>
          </div>
        </div>
      </section>

      <aside class="side right">
        <i class="hgrip" />
        <button v-for="n in modify" :key="n" class="vb" :aria-label="n"><svg viewBox="0 0 16 16" v-html="icons[n]" /></button>
        <i class="hgrip" />
        <template v-for="(n, i) in order" :key="i">
          <i v-if="n === '|'" class="hsep" />
          <button v-else class="vb" :aria-label="n"><svg viewBox="0 0 16 16" v-html="icons[n]" /></button>
        </template>
      </aside>
    </main>

    <section class="cmd">
      <i class="cmdgrip" />
      <div class="cmdtext">
        <div class="hist">
          <p v-for="h in history" :key="h"><span v-for="(r, i) in runs(h)" :key="i" :class="{ latin: r.latin }">{{ r.text }}</span></p>
        </div>
        <p class="prompt"><span v-for="(r, i) in runs(prompt)" :key="i" :class="{ latin: r.latin }">{{ r.text }}</span></p>
      </div>
    </section>

    <footer class="status">
      <div class="coords"><span>325.6086,</span><span>4856.3657, 0.0000</span></div>
      <button v-for="t in toggles" :key="t" class="tg" :class="{ on: active.has(t) }" :aria-label="t"><svg viewBox="0 0 16 16" v-html="icons[t]" /></button>
      <div class="status-right">
        <button class="model">模型</button>
        <button class="tg" aria-label="布局"><svg viewBox="0 0 16 16" v-html="icons.layout" /></button>
        <button class="tg" aria-label="快速查看"><svg viewBox="0 0 16 16" v-html="icons.quick" /></button>
        <i class="space" />
        <button class="scale"><svg viewBox="0 0 16 16" v-html="icons.anno" />1:1<i class="tri small" /></button>
        <button v-for="n in ['sunadd', 'anno', 'gear', 'wslock', 'hardware']" :key="n" class="tg" :aria-label="n"><svg viewBox="0 0 16 16" v-html="icons[n]" /></button>
        <button class="tg lamp" aria-label="隔离对象"><svg viewBox="0 0 16 16" v-html="icons.bulb" /></button>
        <i class="tri small" />
        <button class="tg" aria-label="全屏显示"><svg viewBox="0 0 16 16" v-html="icons.clean" /></button>
      </div>
    </footer>

    <div class="taskbar">
      <button class="start" aria-label="开始"><svg viewBox="0 0 16 16" v-html="icons.win" /></button>
      <label class="search">
        <i class="cortana" />
        <input type="text" placeholder="在这里输入你要搜索的内容" aria-label="搜索">
        <svg viewBox="0 0 16 16" v-html="icons.mic" />
      </label>
      <button v-for="t in tasks" :key="t" class="task" :class="{ cur: t === 'acad' }" :aria-label="t"><svg viewBox="0 0 16 16" v-html="icons[t]" /></button>
      <div class="tray">
        <svg v-for="n in ['trayup', 'battery', 'wifi', 'sound']" :key="n" viewBox="0 0 16 16" v-html="icons[n]" />
        <span>中</span>
        <b>M</b>
      </div>
      <time class="clock">12:15<br>2019/1/5</time>
    </div>

    <div class="mark">
      <svg viewBox="0 0 184 90">
        <g class="brand">
          <ellipse cx="67" cy="23" rx="6" ry="8" /><ellipse cx="80" cy="11" rx="6" ry="8" />
          <ellipse cx="95" cy="11" rx="6" ry="8" /><ellipse cx="105" cy="27" rx="6" ry="8" />
          <path d="M87 26C80 26 76 35 69 41C62 47 64 58 75 58C81 58 83 56 87 56C91 56 94 58 99 58C110 58 112 47 105 41C98 35 94 26 87 26Z" />
          <text x="-2" y="58" class="bai">Bai</text>
          <text x="115" y="55" class="jy">经验</text>
        </g>
        <text x="73" y="53" class="du">du</text>
        <text x="0" y="80" class="url">jingyan.baidu.com</text>
      </svg>
    </div>
  </div>
</template>

<style>
html, body { margin: 0; background: #646464; overflow: hidden; }
</style>

<style scoped>
.app { position: relative; display: flex; flex-direction: column; height: 100vh; background: #676767; font: 9px/12px "Noto Sans", "Noto Sans CJK SC", sans-serif; color: #333; overflow: hidden; }
.app * { box-sizing: border-box; }
button, input, select { margin: 0; padding: 0; border: 0; background: none; font: inherit; color: inherit; border-radius: 0; appearance: none; outline: 0; }
button { display: flex; align-items: center; justify-content: center; flex: none; white-space: nowrap; }
svg { display: block; flex: none; width: 14px; height: 14px; }
i { flex: none; }

.head { display: grid; grid-template-columns: 30px 1fr; grid-template-rows: 17px 16px; flex: none; background: #777; }
.logo { grid-row: 1 / 3; height: 30px; background: linear-gradient(#b6b6b6, #777); border: 1px solid #5a5a5a; border-left: 0; }
.logo svg { width: 28px; height: 28px; }
.title { display: flex; min-width: 0; background: #fff; }
.title-left, .title-right { display: flex; align-items: center; flex: none; background: linear-gradient(#b2b2b2, #8b8b8b); }
.title-left { width: 313px; padding-left: 4px; gap: 4px; }
.quick { display: flex; flex: none; width: 137px; align-items: center; justify-content: space-between; color: #444; }
.tb { width: 16px; height: 16px; }
.thin { width: 9px; }
.thin svg { width: 12px; height: 12px; }
.ws { display: flex; align-items: center; flex: none; width: 131px; height: 16px; padding: 0 3px 0 1px; background: linear-gradient(#f0f0f0, #c9c9c9); }
.ws select { flex: 1; min-width: 0; color: #555; height: 14px; }
.tri { width: 0; height: 0; border: 3px solid transparent; border-top: 4px solid #333; border-bottom: 0; }
.tri.small { border-width: 2px; border-top-width: 3px; border-bottom-width: 0; }
.tri.east { border: 3px solid transparent; border-left: 4px solid #111; border-right: 0; }
.title-right { margin-left: auto; width: 302px; gap: 3px; padding: 0 3px; }
.find { width: 132px; height: 15px; padding-left: 2px; background: #fff; border: 1px solid #777; font-style: italic; }
.find::placeholder { color: #555; opacity: 1; }
.login { gap: 2px; color: #fff; margin-right: auto; }
.rule { width: 1px; height: 14px; margin: 0 3px; background: #aaa; }
.winbtns { display: flex; flex: none; width: 120px; justify-content: space-between; padding: 0 14px 0 30px; }
.winbtns svg { width: 9px; height: 9px; }
.menu { display: flex; align-items: center; gap: 18px; padding: 0 4px 0 10px; background: linear-gradient(#6c6c6c, #979797 70%, #7c7c7c); color: #fff; }
.docbtns { display: flex; gap: 5px; margin-left: auto; }
.docbtns svg { width: 8px; height: 8px; }

.row { display: flex; flex: none; height: 20px; background: #676767; border-bottom: 1px solid #565656; }
.grip { width: 5px; height: 17px; margin: 0 1px; background: repeating-linear-gradient(90deg, #777 0 1px, #4d4d4d 1px 2px); }
.bar { display: flex; align-items: center; flex: none; height: 17px; background: #ededed; }
.standard { width: 465px; padding: 0 1px; justify-content: space-between; color: #444; }
.dim { color: #aaa; }
.sep { width: 1px; height: 14px; margin: 0 2px; background: #a0a0a0; }
.standard .sep, .modeling .sep { margin: 0 1px; }
.combo { position: relative; display: flex; align-items: center; flex: 1; min-width: 0; height: 17px; padding: 0 12px 0 6px; background: #cacaca; color: #6c6c6c; border-right: 1px solid #b5b5b5; }
.combo::after { content: ""; position: absolute; right: 5px; top: 5px; width: 4px; height: 4px; border: solid #999; border-width: 0 1px 1px 0; transform: rotate(45deg); }
.combo select { flex: 1; min-width: 0; height: 16px; }
.styled { width: 110px; }
.styled.lead { width: 103px; }
.centered { padding-left: 14px; }
.wsbar { width: 160px; }
.wsbar .tb { margin: 0 0 0 1px; }
.laybar { width: 287px; }
.layer { margin: 0 1px; padding-left: 1px; }
.layer svg { width: 12px; height: 12px; }
.layer select { margin-left: 3px; }
.prop { font: 9px/12px "Liberation Serif", serif; }
.prop svg { width: 11px; height: 11px; margin-left: -3px; }
.color { width: 110px; }
.ltype { width: 120px; }
.lweight { width: 97px; }
.plot { width: 93px; }
.sample { height: 1px; background: #333; width: 44px; margin: 0 3px 0 -2px; }
.lweight .sample { width: 26px; }

.work { display: flex; flex: 1; min-height: 0; background: #676767; overflow: hidden; }
.side { display: flex; flex-direction: column; align-items: center; align-self: flex-start; flex: none; width: 18px; background: #ededed; border: 1px solid #484848; border-top: 0; overflow: hidden; }
.left { margin-right: 4px; }
.right { margin: 0 3px 0 5px; max-height: 100%; }
.vb { width: 16px; height: 16px; }
.hgrip { align-self: stretch; height: 7px; background: repeating-linear-gradient(#777 0 1px, #4d4d4d 1px 2px); }
.hsep { width: 14px; height: 1px; margin: 3px 0; background: #aaa; }
.doc { display: grid; flex: 1; grid-template-columns: 1fr 12px; grid-template-rows: 1fr 12px; min-width: 0; border: 1px solid #999; border-width: 2px 0 0 1px; }
.view { position: relative; overflow: hidden; background: #000; min-height: 0; }
.scene { position: absolute; inset: 0; width: 100%; height: 100%; }
.axis { fill: #d8d8d8; font: 300 14px "Open Sans", sans-serif; }
.vplabel { position: absolute; left: 3px; top: 3px; color: #eee; }
.floatbar { position: absolute; left: 25px; top: 16px; display: flex; background: #555; }
.modeling { width: 383px; padding: 0 1px; justify-content: space-between; }
.modeling .tb { width: 15px; }
.fclose { width: 6px; align-self: stretch; align-items: flex-start; color: #fff; font: bold 8px/8px "DejaVu Sans", sans-serif; }
.cube { position: absolute; right: 5px; top: 19px; width: 80px; display: flex; flex-direction: column; align-items: center; }
.cube svg { width: 80px; height: 68px; }
.cube button { margin-top: 5px; width: 42px; height: 12px; border-radius: 2px; background: #76767e; color: #b4b4b4; font-family: "Noto Sans CJK SC", sans-serif; }
.dirs { fill: #999; font: 9px "Noto Sans CJK SC", sans-serif; }
.far { font-size: 7px; }
.face { fill: #444; font: 9px "Noto Sans CJK SC", sans-serif; }
.face.big { font-size: 13px; }
.vscroll { display: flex; flex-direction: column; align-items: center; background: #f0f0f0; }
.vscroll button { width: 12px; height: 13px; }
.vscroll svg, .hscroll svg { width: 8px; height: 8px; }
.vspace-a { flex: 96; }
.vspace-b { flex: 249; }
.vthumb { width: 11px; height: 13px; background: #cdcdcd; }
.tabs { grid-column: 1 / 3; display: flex; align-items: stretch; background: #f0f0f0; }
.nav { width: 10px; }
.nav svg { width: 9px; height: 9px; }
.tab { position: relative; width: 34px; color: #222; }
.tab::after { content: ""; position: absolute; right: 0; top: 0; height: 12px; width: 1px; background: #444; transform: skewX(-20deg); }
.tab.on { background: #000; color: #fff; font-weight: bold; clip-path: polygon(0 0, 100% 0, 88% 100%, 12% 100%); }
.hscroll { display: flex; align-items: center; width: 332px; margin-left: auto; padding-right: 12px; }
.split { width: 4px; height: 10px; background: #d0d0d0; border-right: 1px solid #aaa; }
.hscroll button { width: 14px; }
.hspace-a { flex: 172; }
.hspace-b { flex: 78; }
.hthumb { width: 40px; height: 12px; background: #cdcdcd; }

.cmd { display: flex; flex: none; height: 46px; background: #c8c8c8; border-top: 3px solid #6a6a6a; }
.cmdgrip { width: 12px; background: #a2a2a2; border-right: 1px solid #ddd; }
.cmdtext { display: flex; flex: 1; flex-direction: column; justify-content: space-between; font: 10px/11px "Noto Sans CJK SC", sans-serif; color: #222; }
.cmdtext p { margin: 0; padding-left: 1px; height: 11px; overflow: hidden; white-space: pre; }
.hist { padding-top: 1px; }
.latin { font: 9px/11px "DejaVu Sans Mono", monospace; }
.prompt { background: #fff; }

.status { display: flex; flex: none; align-items: center; height: 17px; background: linear-gradient(#777, #929292); border-top: 1px solid #555; }
.coords { display: flex; gap: 15px; width: 159px; padding-left: 8px; font: 7px/10px "DejaVu Sans Mono", monospace; color: #111; white-space: pre; }
.tg { width: 16px; height: 16px; background: #b7b7b7; border-right: 1px solid #888; }
.tg svg { width: 13px; height: 13px; }
.tg.on { background: #b5dbe6; }
.status-right { display: flex; align-items: center; margin-left: auto; gap: 1px; padding-right: 1px; }
.model { width: 20px; height: 16px; background: #b7b7b7; color: #111; }
.space { width: 12px; }
.scale { width: 40px; height: 16px; background: #b7b7b7; gap: 2px; font-size: 8px; }
.lamp { width: 20px; margin-right: 4px; background: #858585; }

.taskbar { display: flex; flex: none; height: 29px; background: #04191f; color: #f2f2f2; }
.start { width: 35px; background: #03131a; }
.search { display: flex; align-items: center; flex: none; width: 252px; padding: 0 8px 0 7px; background: #f2f2f2; }
.cortana { width: 15px; height: 15px; border: 2px solid #111; border-radius: 50%; }
.search input { flex: 1; min-width: 0; padding-left: 7px; font: 10px/14px "Noto Sans CJK SC", sans-serif; color: #444; }
.search input::placeholder { color: #444; opacity: 1; }
.task { width: 32px; margin-left: 4px; border-bottom: 2px solid #7cc6d8; }
.task.cur { width: 35px; margin-left: 2px; margin-right: -1px; background: #3b484d; }
.task svg { width: 17px; height: 17px; }
.tray { display: flex; align-items: center; gap: 4px; margin-left: auto; font: 10px/12px "Noto Sans CJK SC", sans-serif; }
.tray b { width: 11px; margin-left: 6px; background: #fff; color: #111; text-align: center; font: bold 10px/12px "Liberation Sans", sans-serif; }
.clock { width: 56px; margin: 1px 3px 0 5px; border-right: 1px solid #445; text-align: center; font-size: 9px; line-height: 14px; }

.mark { position: absolute; right: 48px; bottom: 18px; pointer-events: none; }
.mark svg { width: 184px; height: 90px; overflow: visible; }
.brand { fill: #fff; fill-opacity: .8; stroke: #999; stroke-opacity: .35; stroke-width: 1; }
.bai { font: bold 40px "Liberation Sans", sans-serif; }
.jy { font: bold 30px "Noto Sans CJK SC", sans-serif; }
.du { font: 25px "Liberation Sans", sans-serif; fill: #a5a5a5; stroke: #a5a5a5; stroke-width: 1; }
.url { font: 20px "Noto Sans", sans-serif; fill: #fff; fill-opacity: .9; stroke: #777; stroke-width: 2px; stroke-opacity: .35; paint-order: stroke; }
</style>
